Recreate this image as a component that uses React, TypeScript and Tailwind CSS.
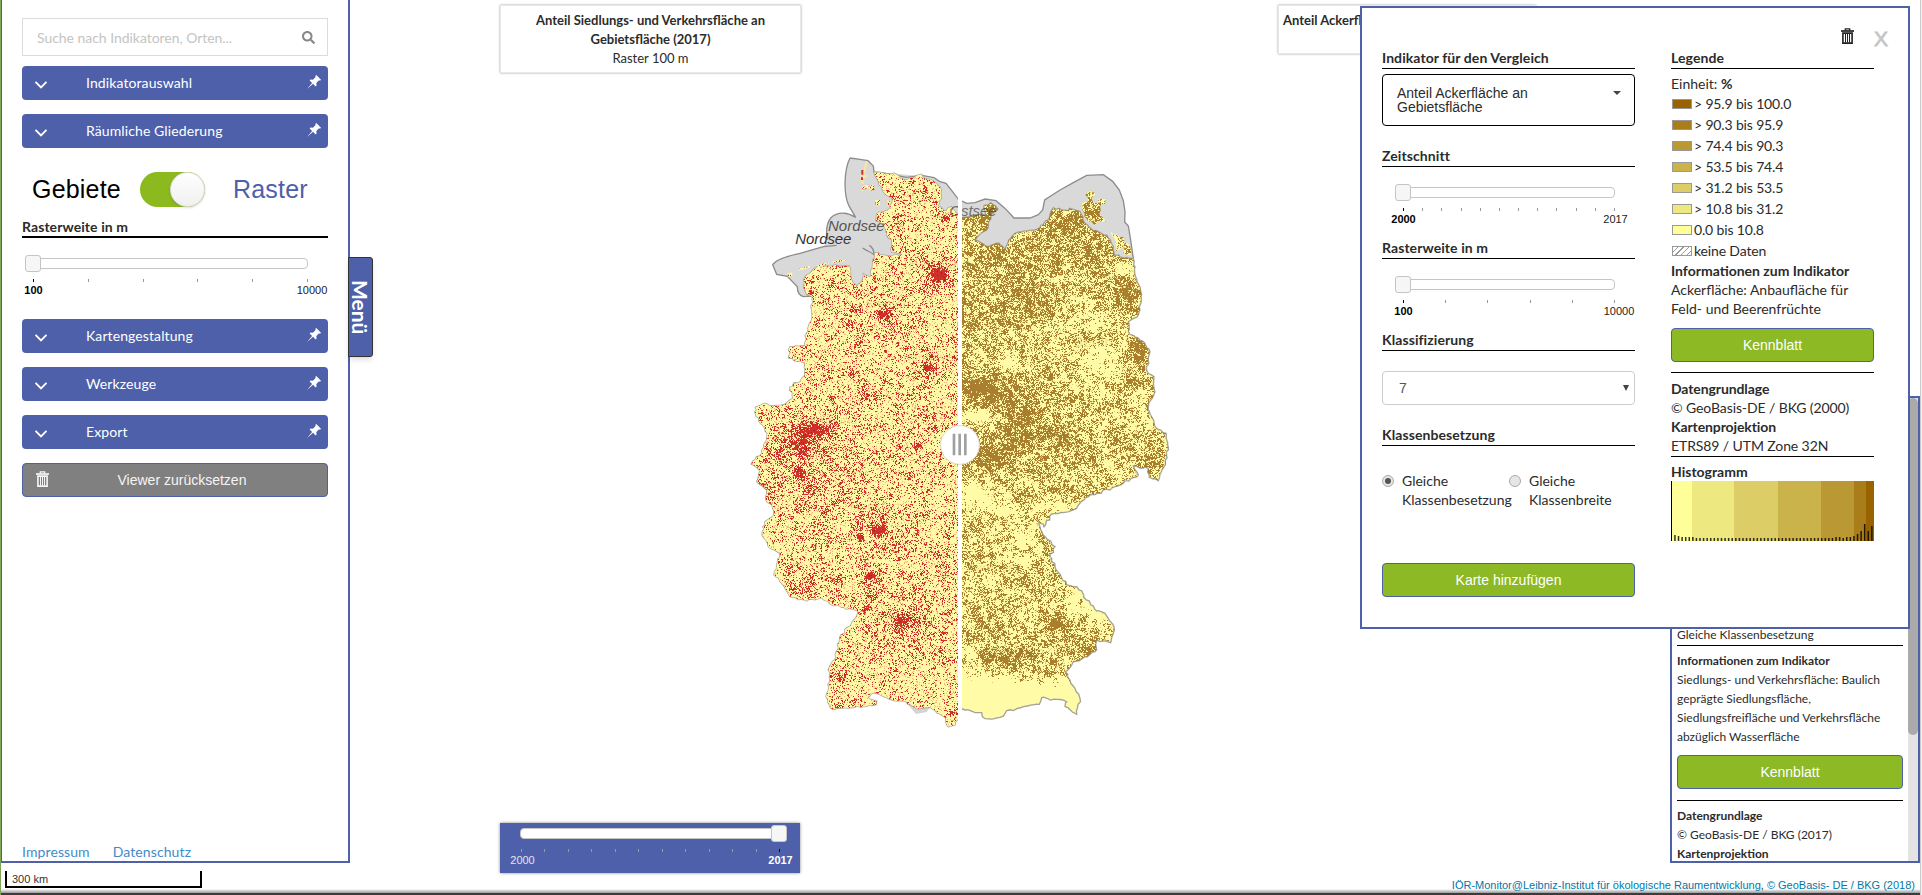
import React from "react";
import { FaSearch } from "react-icons/fa";

type Pt = [number, number];

/* ---------- deterministic noise ---------- */
function hash(x: number, y: number, s: number) {
  let h = (Math.imul(x, 374761393) + Math.imul(y, 668265263) + Math.imul(s, 1274126177)) | 0;
  h = Math.imul(h ^ (h >>> 13), 1274126177);
  h ^= h >>> 16;
  return (h >>> 0) / 4294967296;
}
function noise(x: number, y: number, s: number) {
  const ix = Math.floor(x);
  const iy = Math.floor(y);
  const fx = x - ix;
  const fy = y - iy;
  const u = fx * fx * (3 - 2 * fx);
  const v = fy * fy * (3 - 2 * fy);
  const a = hash(ix, iy, s) * (1 - u) + hash(ix + 1, iy, s) * u;
  const b = hash(ix, iy + 1, s) * (1 - u) + hash(ix + 1, iy + 1, s) * u;
  return a * (1 - v) + b * v;
}

/* ---------- geometry: 3 units are one pixel ---------- */
const parse = (s: string): Pt[] => s.trim().split(/\s+/).map((p) => p.split(",").map(Number) as Pt);

function rough(pts: Pt[], amp: number, seed: number) {
  let d = "";
  pts.forEach((p, i) => {
    const q = pts[(i + 1) % pts.length];
    const len = Math.hypot(q[0] - p[0], q[1] - p[1]);
    const n = Math.max(1, Math.round(len / 9));
    for (let k = 0; k < n; k++) {
      const t = k / n;
      const jx = k ? (hash(i, k, seed) - 0.5) * amp : 0;
      const jy = k ? (hash(k, i, seed + 1) - 0.5) * amp : 0;
      d += `${d ? "L" : "M"}${(p[0] + (q[0] - p[0]) * t + jx).toFixed(1)},${(p[1] + (q[1] - p[1]) * t + jy).toFixed(1)}`;
    }
  });
  return d + "Z";
}

const land = rough(
  parse(`402,97 430,100 462,100 500,120 520,114 545,103 556,116 580,123 600,140 604,175 594,198 618,214 634,200 654,226
 666,232 700,226 736,226 732,196 752,188 774,208 752,226 745,262 705,300 745,320 778,310 795,328 806,300 825,280 890,268 925,240 940,203 965,210 1000,208 1020,214 1035,250
 1060,272 1100,285 1120,320 1124,346 1180,356 1184,400 1197,435 1203,470 1195,525 1165,545 1165,575 1200,600 1230,635 1220,692 1242,710 1245,755 1225,800
 1245,860 1278,880 1285,930 1272,980 1255,1022 1228,1012 1225,985 1180,978 1195,1005 1125,1040 1045,1070 1000,1110 935,1122 912,1160 890,1135 910,1185
 945,1220 930,1250 945,1280 980,1335 1010,1340 1070,1413 1095,1420 1122,1460 1112,1508 1072,1500 1065,1535 1010,1563 975,1595 1005,1645 1020,1675 1010,1723 975,1700
 980,1685 905,1673 898,1693 800,1712 780,1732 735,1736 725,1718 666,1706 654,1738 645,1755 625,1760 612,1730 570,1702 530,1706 490,1682 450,1678
 400,1658 382,1672 410,1684 408,1694 370,1700 278,1708 258,1670 270,1620 265,1590 285,1560 300,1490 335,1450 355,1415 270,1392 245,1373 200,1383 150,1370
 130,1335 102,1305 120,1240 85,1220 66,1185 75,1145 100,1128 98,1105 78,1080 80,1050 50,1025 60,995 34,972 65,940 80,900 82,880 68,855 48,828
 46,802 72,790 90,798 130,795 160,775 150,742 193,710 195,670 147,655 150,620 195,618 200,580 215,540 217,470 200,463 190,440 196,410 220,388
 260,376 328,378 335,420 350,440 366,425 370,402 390,412 398,370 404,338 440,348 495,344 455,336 455,298 440,285 434,250 408,242 410,222 450,205 458,180 430,155 416,125`),
  7,
  3
);
const islands = [
  rough(parse("1030,215 1026,190 1044,185 1036,165 1050,150 1064,158 1056,180 1072,190 1076,178 1098,176 1096,192 1080,200 1078,222 1105,246 1074,244 1062,254 1040,236"), 9, 8),
  rough(parse("1112,275 1122,284 1148,290 1152,308 1170,320 1170,345 1150,340 1152,322 1134,330 1125,335 1128,304"), 9, 9),
  rough(parse("368,152 366,142 384,134 403,134 404,150 392,152 388,144"), 5, 12),
  rough(parse("404,182 420,180 420,196 406,196"), 4, 13),
  rough(parse("438,180 452,186 444,200"), 3, 14),
  rough(parse("142,402 158,398 156,408 144,410"), 3, 15),
  rough(parse("176,386 210,378 210,383 178,391"), 2, 16),
  rough(parse("232,376 266,368 266,372 234,381"), 2, 17),
  rough(parse("278,364 318,359 318,364 280,369"), 2, 18),
].join("");
const sylt = "M380,64 L374,92 L366,104 L378,108 L364,116 L370,132";
const sea =
  "M330,54 L360,58 L384,62 L400,78 L402,96 L545,108 L582,113 L598,124 L618,130 L640,158 L655,178 L680,190 L705,188 L735,177 L768,182 L796,206 L822,234 L870,234 L895,224 L908,210 L914,180 L960,150 L1000,128 L1040,106 L1090,104 L1118,124 L1138,150 L1150,182 L1155,215 L1154,246 L1165,258 L1172,300 L1180,356 L1100,420 L900,360 L700,420 L500,420 L217,468 L190,470 C175,465 172,452 172,440 L142,409 L110,403 L98,374 C112,355 150,348 180,340 L250,320 L262,300 C256,268 262,248 272,234 C295,212 325,218 347,232 L326,196 C310,160 312,90 330,54Z";
const seaLine =
  "M330,54 L360,58 L384,62 L400,78 L402,96 L430,99 L500,112 L545,106 L582,113 L598,124 L618,130 L640,158 L655,178 L680,190 L705,188 L735,177 L768,182 L796,206 L822,234 L870,234 L895,224 L908,210 L914,180 L960,150 L1000,128 L1040,106 L1090,104 L1118,124 L1138,150 L1150,182 L1155,215 L1154,246 L1165,258 L1172,300 L1180,356 M217,468 L190,470 C175,465 172,452 172,440 L142,409 L110,403 L98,374 C112,355 150,348 180,340 L250,320 L290,316 M262,300 C256,268 262,248 272,234 C295,212 325,218 347,232 L326,196 C310,160 312,90 330,54 M368,324 C382,334 398,338 404,346 M388,316 C398,322 402,332 402,344";

/* ---------- raster cells ---------- */
type Spot = [number, number, number, number, number];
const cities: Spot[] = [
  [597, 405, 26, 20, 1.1], [597, 405, 60, 50, 0.12], [616, 232, 13, 10, 0.7], [350, 508, 12, 11, 0.6], [432, 518, 26, 17, 0.6], [425, 510, 55, 40, 0.1], [562, 682, 15, 13, 0.9], [560, 680, 40, 36, 0.1],
  [212, 458, 12, 8, 0.6], [404, 408, 9, 8, 0.6], [518, 126, 8, 8, 0.5], [590, 730, 8, 8, 0.4], [275, 775, 11, 10, 0.5],
  [332, 705, 9, 9, 0.4], [430, 725, 20, 14, 0.3], [400, 760, 22, 16, 0.4], [205, 870, 58, 24, 0.65], [250, 862, 30, 14, 0.35],
  [175, 905, 52, 30, 0.28], [185, 930, 22, 30, 0.28], [180, 995, 14, 18, 0.85], [205, 1040, 18, 20, 0.4], [66, 1033, 10, 9, 0.5], [170, 930, 90, 110, 0.13],
  [115, 945, 24, 18, 0.3], [250, 1000, 150, 60, 0.06], [530, 917, 11, 10, 0.9], [325, 1010, 9, 9, 0.35], [415, 1170, 22, 12, 0.9], [358, 1190, 10, 10, 0.9],
  [400, 1150, 50, 50, 0.2], [480, 1200, 30, 24, 0.2], [590, 1245, 10, 9, 0.6], [255, 1112, 12, 14, 0.35], [390, 1306, 15, 12, 0.9], [380, 1320, 44, 50, 0.2],
  [200, 1345, 34, 26, 0.32], [160, 1358, 14, 8, 0.4], [376, 1406, 12, 9, 0.8], [280, 1318, 20, 8, 0.35], [488, 1445, 24, 22, 0.55],
  [485, 1435, 75, 64, 0.18], [595, 1532, 8, 8, 0.5], [555, 1082, 9, 8, 0.5], [140, 1250, 9, 8, 0.4], [300, 1612, 9, 9, 0.5],
  [635, 1715, 12, 10, 0.5], [293, 1700, 16, 7, 0.6], [430, 1420, 18, 9, 0.4], [568, 1450, 8, 8, 0.5], [370, 95, 7, 16, 0.5],
  [625, 1190, 8, 8, 0.4], [590, 865, 8, 8, 0.4], [610, 540, 8, 8, 0.4], [640, 480, 30, 60, -0.05], [620, 560, 40, 40, -0.05],
  [120, 1200, 60, 50, -0.06], [330, 1330, 14, 26, -0.15], [600, 780, 50, 80, -0.04],
];
const fields: Spot[] = [
  [770, 750, 70, 45, 0.55], [840, 830, 60, 50, 0.45], [740, 960, 70, 34, 0.5], [800, 910, 90, 34, 0.35], [690, 740, 40, 30, 0.3],
  [1050, 205, 40, 45, 0.15], [970, 260, 60, 34, 0.2], [750, 205, 16, 14, 0.6], [720, 235, 50, 16, 0.3], [780, 340, 60, 40, 0.12], [1010, 330, 90, 50, 0.1],
  [1160, 460, 34, 34, 0.35], [1195, 630, 30, 40, 0.35], [1010, 770, 40, 10, 0.35], [940, 890, 60, 30, 0.3], [1080, 950, 60, 30, 0.2],
  [1240, 940, 30, 50, 0.2], [860, 470, 80, 50, 0.1], [960, 1445, 60, 26, 0.4], [1045, 1530, 24, 20, 0.4], [800, 1550, 90, 22, 0.45],
  [800, 1480, 110, 30, 0.1], [940, 1590, 34, 20, 0.3], [730, 1400, 60, 60, 0.08], [1165, 720, 14, 14, 0.4],
  [1070, 665, 60, 40, -0.5], [1080, 540, 50, 30, -0.4], [990, 540, 60, 40, -0.2], [1060, 740, 80, 40, -0.2], [930, 415, 70, 10, -0.45], [1160, 385, 40, 22, -0.5],
  [810, 668, 30, 22, -0.5], [720, 830, 50, 18, -0.7], [710, 1060, 50, 30, -0.7], [770, 1105, 50, 16, -0.6], [1020, 480, 40, 30, -0.25],
  [850, 1195, 30, 22, -0.4], [845, 1262, 60, 14, -0.35], [755, 1320, 26, 26, -0.4], [845, 1355, 30, 12, -0.35], [1000, 1370, 34, 45, -0.5],
  [1080, 1420, 34, 45, -0.4], [825, 1455, 34, 26, -0.4], [690, 1540, 26, 30, -0.4], [760, 1690, 130, 60, -1.2], [900, 1680, 110, 50, -1],
  [1000, 1690, 50, 60, -1], [700, 1660, 90, 40, -0.8], [1200, 790, 40, 50, -0.25], [1240, 900, 30, 26, -0.3], [950, 1100, 60, 24, -0.5],
  [930, 560, 40, 20, -0.15], [1110, 980, 22, 22, -0.35], [920, 910, 14, 12, -0.5], [940, 620, 40, 14, -0.15], [1100, 840, 90, 40, -0.1],
];
const influence = (list: Spot[], x: number, y: number) => {
  let v = 0;
  for (const [cx, cy, rx, ry, w] of list) {
    const dx = (x - cx) / rx;
    const dy = (y - cy) / ry;
    const q = dx * dx + dy * dy;
    if (q < 8) v += w * Math.exp(-q);
  }
  return v;
};
function cells(x0: number, x1: number, y0: number, y1: number, level: (x: number, y: number) => number) {
  const out = ["", "", ""];
  for (let y = y0; y < y1; y += 3) {
    let cur = 0;
    let from = x0;
    for (let x = x0; x <= x1; x += 3) {
      const l = x >= x1 ? -1 : level(x, y);
      if (l !== cur) {
        if (cur > 0) out[cur - 1] += `M${from},${y}h${x - from}v3h${from - x}z`;
        cur = l;
        from = x;
      }
    }
  }
  return out;
}
const west = cells(30, 654, 54, 1770, (x, y) => {
  const i = x / 3;
  const j = y / 3;
  const n = noise(i / 2.2, j / 2.2, 5) * 0.65 + noise(i / 8, j / 8, 6) * 0.35;
  const p = 0.15 + (n - 0.5) * 0.85 + influence(cities, x, y);
  const r = hash(i, j, 7);
  if (r < Math.max(0.035, p)) return hash(i, j, 21) < 0.1 ? 3 : 1;
  return r < Math.max(0.05, p) + 0.11 ? 2 : 0;
});
const east = cells(666, 1296, 140, 1750, (x, y) => {
  const i = x / 3;
  const j = y / 3;
  const n = noise(i / 2.1, j / 2.1, 15) * 0.55 + noise(i / 6, j / 6, 16) * 0.35 + noise(i / 24, j / 24, 17) * 0.1;
  const base = y < 560 ? 0.47 : y < 1050 ? 0.36 : 0.33;
  const p = base + (n - 0.5) * 1.5 + influence(fields, x, y);
  const r = hash(i, j, 18);
  if (r < p) return 1;
  return r < p + 0.08 ? 2 : 0;
});

function GermanyMap() {
  return (
    <svg className="absolute left-[740px] top-[140px]" width="440" height="600" viewBox="0 0 1320 1800">
      <defs>
        <clipPath id="land">
          <path d={land + islands} />
        </clipPath>
        <clipPath id="halves">
          <path d="M0,0H654V1800H0ZM666,0H1320V1800H666Z" />
        </clipPath>
      </defs>
      <g clipPath="url(#halves)">
        <path d={sea} fill="#d9d9d9" />
        <path d="M470,1660 L515,1690 L568,1705 L560,1716 L528,1722 L500,1690Z" fill="#d4d4d4" />
        <path d={seaLine} fill="none" stroke="#8c8c8c" strokeWidth="4" />
        <g fontFamily="Liberation Sans" fontStyle="italic" fontSize="45" fill="#555">
          <text x="264" y="272" textLength="170">Nordsee</text>
          <text x="166" y="313" fill="#333" textLength="168">Nordsee</text>
        </g>
        <path d={land} fill="#fffba6" stroke="#a3a39a" strokeWidth="4" />
        <path d={sylt} fill="none" stroke="#fbe79a" strokeWidth="6" />
        <path d="M367,90v14M366,112v8" stroke="#cf2a27" strokeWidth="6" />
        <path d={islands} fill="#fffba6" />
        <g clipPath="url(#land)" shapeRendering="crispEdges">
          <path d="M30,40H654V1800H30Z" fill="#fff8a6" />
          <path d={west[0]} fill="#d0302b" />
          <path d={west[1]} fill="#f0b47f" />
          <path d={west[2]} fill="#a8241f" />
          <path d={east[0]} fill="#a97f2e" />
          <path d={east[1]} fill="#dccb78" />
        </g>
        <text x="628" y="229" textLength="142" fontFamily="Liberation Sans" fontStyle="italic" fontSize="45" fill="#444" opacity="0.7">Ostsee</text>
        <g fontFamily="DejaVu Sans" fontSize="40" fill="#4a4a20" opacity="0.13">
          <text x="505" y="388">Hamburg</text>
          <text x="376" y="505" fontSize="34">Bremen</text>
          <text x="488" y="662" fontSize="34">Hannover</text>
          <text x="1002" y="620">Berlin</text>
          <text x="868" y="892" fontSize="34">Leipzig</text>
          <text x="180" y="852" fontSize="34">Dortmund</text>
          <text x="330" y="1110" fontSize="34">Frankfurt</text>
          <text x="680" y="1292" fontSize="34">Nürnberg</text>
          <text x="410" y="1440" fontSize="34">Stuttgart</text>
          <text x="730" y="1552">München</text>
        </g>
      </g>
      <circle cx="660" cy="915" r="58" fill="#fff" stroke="#dcdcdc" strokeWidth="3" />
      <path d="M642,881v65M659,881v65M676,881v65" stroke="#a0a0a0" strokeWidth="8" />
    </svg>
  );
}

/* ---------- icons ---------- */
const Chevron = () => (
  <svg width="14" height="10" viewBox="0 0 14 10" fill="none" stroke="#fff" strokeWidth="1.9">
    <path d="M1.5 1.8 7 7.3l5.5-5.5" />
  </svg>
);
const Pin = () => (
  <svg width="14" height="14" viewBox="0 0 14 14" fill="#fff">
    <path d="M9.2 0 14 4.8l-1 .9-1-.4-2.7 2.8.3 2.3-1 1L6.1 8.8 0 14l5.1-6.1L2.6 5.4l1-1 2.3.3 2.8-2.7L8.3 1z" />
  </svg>
);
const Trash = ({ className }: { className: string }) => (
  <svg className={className} width="13" height="16" viewBox="0 0 13 16" fill="none" stroke="currentColor">
    <path d="M4.3 2.4V.8h4.4v1.6" strokeWidth="1.3" />
    <path d="M0 3h13" strokeWidth="1.7" />
    <path d="M1.9 5.1h9.2v10H1.9z" strokeWidth="1.6" />
    <path d="M4.5 5.6v9M6.5 5.6v9M8.5 5.6v9" strokeWidth="1" />
  </svg>
);

/* ---------- controls ---------- */
function Bar({ children }: { children: React.ReactNode }) {
  return (
    <button className="flex h-[34px] w-full items-center rounded-[4px] bg-[#4e60aa] text-left text-[14px] text-white">
      <span className="ml-[12px] mt-[3px] flex w-[52px]"><Chevron /></span>
      <span className="flex-1 pb-[2px] tracking-[0.1px]">{children}</span>
      <span className="mb-[3px] mr-[7px]"><Pin /></span>
    </button>
  );
}

type SliderProps = { min: string; max: string; steps: number; atEnd?: boolean; dark?: boolean };
function Slider({ min, max, steps, atEnd, dark }: SliderProps) {
  return (
    <div className="font-['Liberation_Sans',sans-serif] text-[11px]">
      <div className="relative h-[11px] rounded-[4px] border border-[#c5c5c5] bg-white">
        <span className={`absolute -top-[4px] h-[17px] w-4 rounded-[3px] border border-[#c5c5c5] bg-[#f6f6f6] ${atEnd ? "-right-px" : "-left-px"}`} />
      </div>
      <div className={`mt-[10px] flex justify-between ${atEnd ? "ml-px mr-[7px]" : "ml-[8px]"}`}>
        {Array.from({ length: steps + 1 }, (_, i) => (
          <span key={i} className={`h-[3px] w-px ${i === (atEnd ? steps : 0) ? "bg-black" : "bg-[#999]"}`} />
        ))}
      </div>
      <div className={`flex justify-between ${atEnd ? "ml-[2px] mr-[7px]" : "ml-[8px]"} ${dark ? "text-[#e3e6f3]" : "text-[#222]"}`}>
        <span className={`flex w-px justify-center leading-[16px] ${atEnd ? "" : "font-bold text-black"}`}>{min}</span>
        <span className={`-mr-px flex w-px justify-center leading-[16px] ${atEnd ? "font-bold text-white" : ""}`}>
          <span className={max === "10000" ? "pl-[7px]" : ""}>{max}</span>
        </span>
      </div>
    </div>
  );
}

const Heading = ({ children }: { children: React.ReactNode }) => (
  <h3 className="h-[21px] border-b border-black text-[14px] font-bold leading-[19px] tracking-[0.08px]">{children}</h3>
);
const GreenButton = ({ children }: { children: React.ReactNode }) => (
  <button className="block h-[34px] w-full rounded-[4px] border border-[#4e60aa] bg-[#8cb924] font-['Liberation_Sans',sans-serif] text-[14px] text-white">
    {children}
  </button>
);
const Radio = ({ on, children }: { on?: boolean; children: React.ReactNode }) => (
  <label className="flex w-[127px] leading-[19px]">
    <span className="mr-2 mt-[4px] flex size-3 shrink-0 items-center justify-center rounded-full border border-[#a9a9a9] bg-[#e6e6e6]">
      {on && <span className="size-1.5 rounded-full bg-[#555]" />}
    </span>
    <span>{children}</span>
  </label>
);

const classes = [
  { range: "> 95.9 bis 100.0", swatch: "bg-[#996300]" },
  { range: "> 90.3 bis 95.9", swatch: "bg-[#a97d19]" },
  { range: "> 74.4 bis 90.3", swatch: "bg-[#ba9833]" },
  { range: "> 53.5 bis 74.4", swatch: "bg-[#cbb34c]" },
  { range: "> 31.2 bis 53.5", swatch: "bg-[#dccd66]" },
  { range: "> 10.8 bis 31.2", swatch: "bg-[#ede87f]" },
  { range: "0.0 bis 10.8", swatch: "bg-[#ffff99]" },
];
const histBands: [number, number, string][] = [
  [0, 21, "#ffff99"], [21, 42, "#ede87f"], [63, 44, "#dccd66"], [107, 43, "#cbb34c"],
  [150, 33, "#ba9833"], [183, 12, "#a97d19"], [195, 8, "#996300"],
];
const histBars = Array.from({ length: 56 }, (_, i) => {
  if (i === 0) return 6;
  if (i === 1) return 5;
  if (i < 6) return 4;
  const tail: Record<number, number> = { 45: 4, 46: 4, 48: 4, 49: 4, 50: 5, 51: 7, 52: 10, 53: 17, 54: 10, 55: 15 };
  return tail[i] ?? 3;
});

function Sidebar() {
  return (
    <aside className="flex h-[863px] flex-col border-b-2 border-l border-r-2 border-[#4e60aa] bg-white px-5 pt-[18px]">
      <div className="flex h-[38px] shrink-0 items-center justify-between border border-[#dcdcdc] pl-[14px] pr-3 text-[14px] tracking-[-0.04px] text-[#c4c4c4]">
        <span>Suche nach Indikatoren, Orten...</span>
        <FaSearch className="size-[13px] text-[#888]" />
      </div>
      <nav className="mt-[10px] flex flex-col gap-[14px]">
        <Bar>Indikatorauswahl</Bar>
        <Bar>Räumliche Gliederung</Bar>
      </nav>
      <div className="mt-6 flex h-[35px] items-center font-['Liberation_Sans',sans-serif] text-[25px] leading-none text-black">
        <span className="ml-[10px] w-[108px] tracking-[0.2px]">Gebiete</span>
        <span className="flex h-[35px] w-[65px] justify-end rounded-full bg-[#8cb91e]">
          <span className="size-[35px] rounded-full border border-[#ddd] bg-gradient-to-b from-white to-[#f0f0f0] shadow" />
        </span>
        <span className="ml-[28px] tracking-[0.2px] text-[#4e60aa]">Raster</span>
      </div>
      <h3 className="mt-[10px] h-[21px] border-b-2 border-black text-[14px] font-bold leading-[19px] tracking-[0.08px]">Rasterweite in m</h3>
      <div className="ml-[3px] mt-5 w-[283px]">
        <Slider min="100" max="10000" steps={5} />
      </div>
      <nav className="mt-[21px] flex flex-col gap-[14px]">
        <Bar>Kartengestaltung</Bar>
        <Bar>Werkzeuge</Bar>
        <Bar>Export</Bar>
        <button className="flex h-[34px] w-full items-center rounded-[4px] border border-[#4e60aa] bg-[#808080] font-['Liberation_Sans',sans-serif] text-[14px] text-[#f5f5f5]">
          <Trash className="mb-[3px] ml-[13px]" />
          <span className="flex-1 pl-[6px] pr-[18px] text-center">Viewer zurücksetzen</span>
        </button>
      </nav>
      <footer className="mb-0 mt-auto flex gap-[23px] text-[14px] leading-[18px] tracking-[0.1px] text-[#428bca]">
        <a>Impressum</a>
        <a>Datenschutz</a>
      </footer>
    </aside>
  );
}

function CompareDialog() {
  return (
    <section className="absolute left-[1360px] top-[6px] flex h-[623px] w-[550px] border-2 border-[#4e60aa] bg-white pl-5 text-[14px]">
      <div className="w-[253px] pt-[40px]">
        <Heading>Indikator für den Vergleich</Heading>
        <div className="mt-[5px] flex h-[52px] justify-between rounded-[4px] border border-black pl-[14px] pr-[13px] pt-[11px] font-['Liberation_Sans',sans-serif] leading-[14px]">
          <span className="w-40">Anteil Ackerfläche an Gebietsfläche</span>
          <span className="mt-[5px] h-0 border-x-4 border-t-4 border-x-transparent border-t-[#444]" />
        </div>
        <div className="mt-[20px]"><Heading>Zeitschnitt</Heading></div>
        <div className="ml-[13px] mt-5 w-[220px]"><Slider min="2000" max="2017" steps={11} /></div>
        <div className="mt-[11px]"><Heading>Rasterweite in m</Heading></div>
        <div className="ml-[13px] mt-5 w-[220px]"><Slider min="100" max="10000" steps={5} /></div>
        <div className="mt-[11px]"><Heading>Klassifizierung</Heading></div>
        <div className="mt-5 flex h-[34px] items-center justify-between rounded-[4px] border border-[#ccc] pl-4 pr-[5px] font-['Liberation_Sans',sans-serif] text-[#555]">
          7
          <span className="h-0 border-x-[3.5px] border-t-[6px] border-x-transparent border-t-[#444]" />
        </div>
        <div className="mt-5"><Heading>Klassenbesetzung</Heading></div>
        <div className="mt-[25px] flex">
          <Radio on>Gleiche Klassenbesetzung</Radio>
          <Radio>Gleiche Klassenbreite</Radio>
        </div>
        <div className="mt-[54px]"><GreenButton>Karte hinzufügen</GreenButton></div>
      </div>
      <div className="ml-9 w-[203px]">
        <div className="-mr-4 flex h-[40px] items-start justify-end">
          <Trash className="mr-[20px] mt-5 text-[#222]" />
          <span className="mt-[19px] w-4 font-['Liberation_Sans',sans-serif] text-[21px] font-normal leading-6 text-[#c5c5c5] [-webkit-text-stroke:0.8px_#c5c5c5]">X</span>
        </div>
        <Heading>Legende</Heading>
        <p className="mb-px mt-[5px] leading-[19px]">Einheit: <b>%</b></p>
        <ul className="-mt-px tracking-[-0.15px]">
          {classes.map((c) => (
            <li key={c.range} className="flex h-[21px] items-center">
              <span className={`ml-px mr-[2px] h-[10px] w-5 border border-[#999] ${c.swatch}`} />
              {c.range}
            </li>
          ))}
          <li className="flex h-[21px] items-center">
            <span className="ml-px mr-[2px] h-[10px] w-5 border border-[#999] bg-[repeating-linear-gradient(135deg,#fff_0_3px,#999_3px_4px)]" />
            keine Daten
          </li>
        </ul>
        <p className="leading-[19px]"><b>Informationen zum Indikator</b><br />Ackerfläche: Anbaufläche für Feld- und Beerenfrüchte</p>
        <div className="mt-[10px]"><GreenButton>Kennblatt</GreenButton></div>
        <p className="mt-[10px] border-y border-black pb-px pt-[6px] leading-[19px] tracking-[-0.1px]">
          <b>Datengrundlage</b><br />© GeoBasis-DE / BKG (2000)<br /><b>Kartenprojektion</b><br />ETRS89 / UTM Zone 32N
        </p>
        <p className="mt-[5px] font-bold leading-[19px]">Histogramm</p>
        <svg className="block" width="203" height="60">
          {histBands.map(([x, w, c]) => <rect key={x} x={x} y="0" width={w} height="60" fill={c} />)}
          <rect width="1" height="60" />
          {histBars.map((h, i) => <rect key={i} x={3.2 + i * 3.58} y={60 - h} width="1.5" height={h} fill="#000" opacity="0.8" />)}
        </svg>
      </div>
    </section>
  );
}

function LegendPanel() {
  return (
    <section className="mt-[396px] flex h-[467px] w-[250px] overflow-hidden border-2 border-[#4e60aa] bg-white text-[12px] leading-[19px]">
      <div className="w-[236px] px-[5px] pt-[227px]">
        <p className="h-[21px] border-b border-black">Gleiche Klassenbesetzung</p>
        <p className="mb-px mt-[5px]"><b>Informationen zum Indikator</b><br />Siedlungs- und Verkehrsfläche: Baulich geprägte Siedlungsfläche, Siedlungsfreifläche und Verkehrsfläche abzüglich Wasserfläche</p>
        <div className="mt-[9px]"><GreenButton>Kennblatt</GreenButton></div>
        <p className="mt-[11px] border-t border-black pt-[5px]"><b>Datengrundlage</b><br />© GeoBasis-DE / BKG (2017)<br /><b>Kartenprojektion</b></p>
      </div>
      <div className="w-[10px] bg-[#e3e3e3]">
        <div className="h-[337px] rounded-[5px] bg-[#aaa]" />
      </div>
    </section>
  );
}

export default function App() {
  return (
    <div className="relative flex h-[895px] w-[1922px] flex-col overflow-hidden bg-white font-['Lato',sans-serif] text-[#2b2b2b]">
      <GermanyMap />
      <div className="flex h-[889px] border-l border-[#7fa557]">
        <div className="w-[349px]">
          <Sidebar />
          <div className="ml-1 mt-2 h-[17px] w-[197px] border-2 border-t-0 border-black pl-[5px] font-['Liberation_Sans',sans-serif] text-[11px] leading-[16px] text-[#333]">300 km</div>
        </div>
        <main className="flex w-[1320px] flex-col justify-between pb-4 pl-[150px] pt-[5px]">
          <div className="flex items-start gap-[477px] text-[13px] leading-[19px]">
            <div className="h-[68px] w-[301px] border border-[#e8e8e8] px-[30px] pt-[5px] text-center shadow-[0_0_2px_#999]">
              <b>Anteil Siedlungs- und Verkehrsfläche an Gebietsfläche (2017)</b><br />Raster 100 m
            </div>
            <div className="h-[49px] w-[258px] overflow-hidden whitespace-nowrap border border-[#e8e8e8] pl-1 pt-[5px] font-bold shadow-[0_0_2px_#999]">
              Anteil Ackerfläche
            </div>
          </div>
          <div className="h-[50px] w-[300px] bg-[#4e60aa] pl-5 pr-[13px] pt-[5px] shadow-[0_0_3px_#888]">
            <Slider min="2000" max="2017" steps={11} atEnd dark />
          </div>
        </main>
        <LegendPanel />
      </div>
      <div className="h-[6px] border-l border-[#7fa557]">
        <div className="h-[4px] bg-gradient-to-b from-white to-[#999]" />
        <div className="h-[2px] bg-[#3c3a3b]" />
      </div>
      <div className="absolute left-[348px] top-[257px] flex h-[100px] w-[25px] items-center justify-center rounded-r-[3px] border border-[#333] bg-[#4e60aa] text-[21px] font-bold leading-[23px] text-white shadow-md [writing-mode:vertical-rl]">
        Menü
      </div>
      <p className="absolute right-[7px] top-[877px] font-['Liberation_Sans',sans-serif] text-[11px] leading-[16px] text-[#333]">
        <a className="text-[#0078a8]">IÖR-Monitor@Leibniz-Institut für ökologische Raumentwicklung</a>,{" "}
        <a className="text-[#0078a8]">© GeoBasis- DE / BKG (2018)</a>
      </p>
      <div className="absolute right-0 top-0 h-[895px] w-[2px] border-l border-[#ccc] bg-[#f0f0f0]" />
      <CompareDialog />
    </div>
  );
}
